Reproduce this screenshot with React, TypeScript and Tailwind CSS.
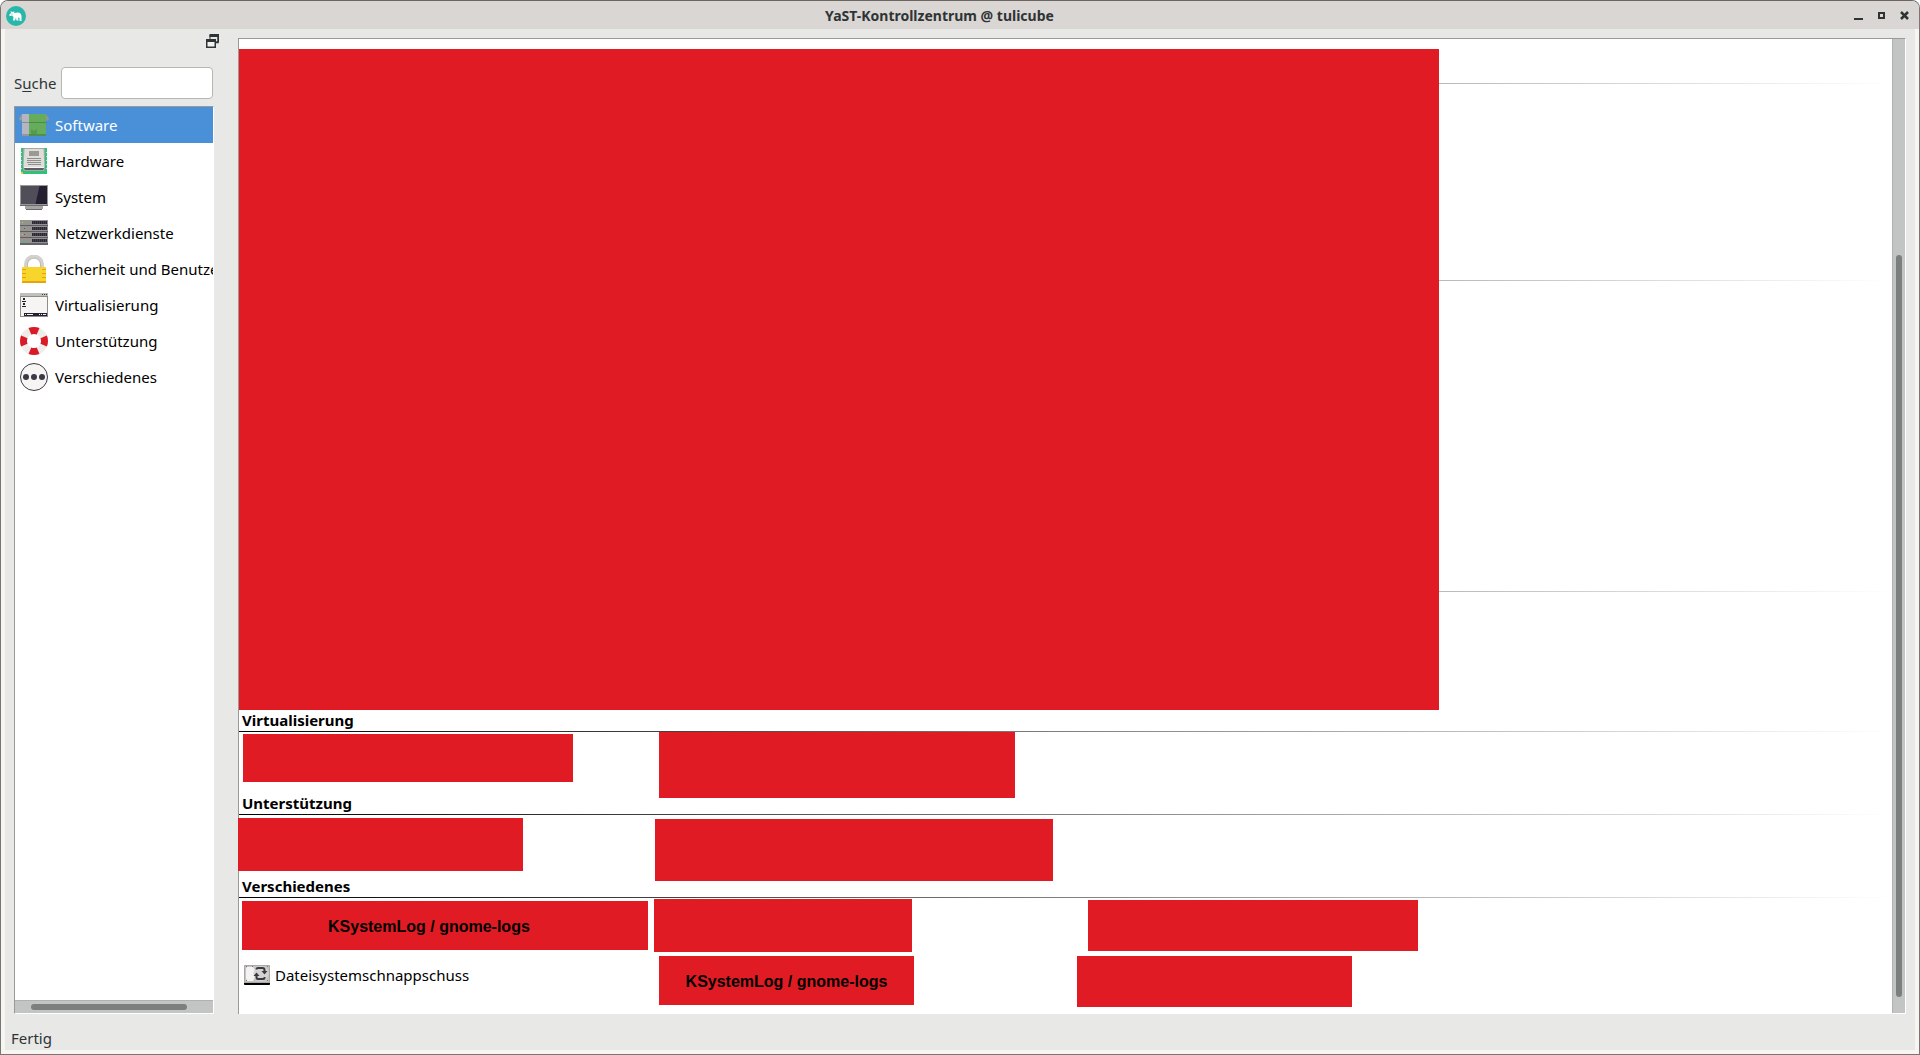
import { useState } from "react"

interface Block {
    className: string
    label?: string
    labelClassName?: string
}

const rule = "h-px shrink-0 bg-linear-to-r from-black to-transparent"

function SoftwareIcon() {
    return (
        <svg viewBox="0 0 28 28" className="size-7 shrink-0 overflow-visible" aria-hidden="true">
            <path d="M2 3L-1 7.500L0 10L2 9Z" fill="#9a9a9e" />
            <path d="M26 3L29 7.500L28 10L26 9Z" fill="#8b9a8b" />
            <path d="M2 3H9V25H2Z" fill="#b3b6c0" />
            <path d="M9 3H26V25H9Z" fill="#65ad5c" />
            <path d="M11 25V18L14 20L17 18V25Z" fill="#579a4f" />
            <path d="M1.500 11H9V12H1.500Z" fill="#898c95" />
            <path d="M9 11H26.500V12H9Z" fill="#4c8a45" />
            <path d="M2 23H9V25H2Z" fill="#9597a0" />
            <path d="M9 23H26V25H9Z" fill="#4f9147" />
        </svg>
    )
}

function HardwareIcon() {
    return (
        <svg viewBox="0 0 28 28" className="size-7 shrink-0" aria-hidden="true">
            <path d="M1 1H27V27H1Z" fill="#2fc27d" />
            <path d="M1.500 5V24M26.500 5V24" stroke="#a8ecca" strokeDasharray="1 3" />
            <path d="M1 25H3V27H1Z" fill="#e8d23a" />
            <rect x="3" y="1" width="22" height="23" rx="2" fill="#a9a7a2" />
            <path d="M4.500 2H23.500L24.500 20H3.500Z" fill="#deddda" />
            <path d="M4 21H24L23 23H5Z" fill="#5e5c64" />
            <path d="M4 20H24V21H4Z" fill="#f6f5f4" />
            <path d="M9 4H19V9H9Z" fill="#9a9996" />
            <path d="M7 11.500H21M7 13.500H21M7 15.500H21M8 17.500H21" stroke="#8f8e8b" />
        </svg>
    )
}

function SystemIcon() {
    return (
        <svg viewBox="0 0 28 28" className="size-7 shrink-0" aria-hidden="true">
            <path d="M0 2H28V23H0Z" fill="#9a9996" />
            <path d="M1 3H27V21H1Z" fill="#504e58" />
            <path d="M19.500 3H27V21H15.500Z" fill="#241f31" />
            <path d="M0 22H28V23H0Z" fill="#6a6970" />
            <path d="M5 23H23V26H5Z" fill="#a5a4a1" />
            <path d="M6 26H22V27H6Z" fill="#6a6970" />
        </svg>
    )
}

function NetworkIcon() {
    const units = [1, 7, 13, 19]
    return (
        <svg viewBox="0 0 28 28" className="size-7 shrink-0" aria-hidden="true">
            <path d="M0 1H28V26H0Z" fill="#5e5c64" />
            {units.map((y, i) => (
                <g key={y}>
                    <path d={`M0 ${y}H28V${y + 5}H0Z`} fill="#949390" />
                    <path d={`M12 ${y + 2.5}H27`} stroke="#2c2838" strokeWidth="3" />
                    <path d={`M13.5 ${y + 2.5}H27`} stroke="#6c6a72" strokeWidth="3" strokeDasharray="0.4 1.600" />
                    <path d={`M2 ${y + 2}H3V${y + 3}H2Z`} fill={i % 2 ? "#33d17a" : "#f5c211"} />
                    <path d={`M4 ${y + 2}H5V${y + 3}H4Z`} fill={i === 1 || i === 2 ? "#e01b24" : "#33d17a"} />
                </g>
            ))}
            <path d="M0 24H28V26H0Z" fill="#64626a" />
        </svg>
    )
}

function LockIcon() {
    return (
        <svg viewBox="0 0 28 28" className="size-7 shrink-0" aria-hidden="true">
            <path d="M6 13V9A8 7.500 0 0 1 22 9V13" fill="none" stroke="#d3d2ce" strokeWidth="4" />
            <path d="M7.500 12V9A6.500 6 0 0 1 20.500 9V12" fill="none" stroke="#bdbbb6" />
            <rect x="2" y="12" width="24" height="16" rx="0.5" fill="#f8d52d" />
            <path d="M2 14.500H6M2 18.500H6M2 22.500H6M22 14.500H26M22 18.500H26M22 22.500H26" stroke="#e5a50a" />
            <path d="M2 26H26V28H2Z" fill="#e5a50a" />
        </svg>
    )
}

function VirtualIcon() {
    return (
        <svg viewBox="0 0 28 28" className="size-7 shrink-0" aria-hidden="true">
            <path d="M0 2H28V26H0Z" fill="#8e8d8a" />
            <path d="M1 6H27V25H1Z" fill="#f6f5f4" />
            <path d="M0 2H28V5H0Z" fill="#c0bfbc" />
            <path d="M22 3H23V4H22ZM24 3H25V4H24ZM26 3H27V4H26Z" fill="#3d3846" />
            <path d="M3 7H5V9H3ZM2 10H6V11H2ZM3 12H5V14H3ZM2 15H6V16H2Z" fill="#241f31" />
            <path d="M4 22H27V25H4Z" fill="#241f31" />
            <path d="M5 23H6V24H5ZM7 23H13V24H7ZM19 23H20V24H19ZM21 23H22V24H21ZM23 23H26V24H23Z" fill="#f6f5f4" />
        </svg>
    )
}

function SupportIcon() {
    return (
        <svg viewBox="0 0 28 28" className="size-7 shrink-0" aria-hidden="true">
            <circle cx="14" cy="14" r="10.500" fill="none" stroke="#eeedeb" strokeWidth="7" />
            <circle
                cx="14"
                cy="14"
                r="10.500"
                fill="none"
                stroke="#d81b26"
                strokeWidth="7"
                pathLength="360"
                strokeDasharray="46 44"
                strokeDashoffset="23"
            />
        </svg>
    )
}

function MiscIcon() {
    return (
        <svg viewBox="0 0 28 28" className="size-7 shrink-0" aria-hidden="true">
            <circle cx="14" cy="14" r="13.500" fill="#f6f5f4" stroke="#3d3846" />
            <circle cx="6" cy="14" r="3" fill="#3d3846" />
            <circle cx="14" cy="14" r="3" fill="#3d3846" />
            <circle cx="22" cy="14" r="3" fill="#3d3846" />
        </svg>
    )
}

function SnapshotIcon() {
    return (
        <svg viewBox="0 0 26 20" className="h-5 w-[26px] shrink-0" aria-hidden="true">
            <rect width="26" height="20" rx="1" fill="#a9a8a4" />
            <rect x="1" y="1" width="24" height="16" rx="1" fill="#c6c5c1" />
            <path d="M3 2H9L11 5V12L9 16H3L2 13V4Z" fill="#f4f3f1" />
            <circle cx="17" cy="8.500" r="7.500" fill="#d5d4d0" />
            <path d="M2 1.500H3M8 1.500H9M23 1.500H24M2 15.500H3M23 15.500H24" stroke="#77767b" />
            <path d="M0 18H26V19Q26 20 25 20H1Q0 20 0 19Z" fill="#000" />
            <path d="M12.500 4.500Q12.500 3 14 3H18.500Q20.500 3 20.500 5V7M20.500 12V12.500Q20.500 14 19 14H14Q12.500 14 12.500 12V9" fill="none" stroke="#3d3846" strokeWidth="2" />
            <path d="M17.500 6H23.500L20.500 9.500ZM9.500 11H15.500L12.500 7.500Z" fill="#3d3846" />
        </svg>
    )
}

function YastLogo() {
    return (
        <svg viewBox="0 0 20 20" className="size-5" aria-hidden="true">
            <circle cx="10" cy="10" r="10" fill="#27b8aa" />
            <path
                d="M3 9L5 7L4.500 5L6 6L8.500 5.500L8 7L12 6.500Q15 6.500 15.500 10V15H13.500V12L12 11.500L12.500 14.500H10.500L10 11.500L9 14.500H7L7.500 11L6 9.500L4 10Z"
                fill="#fff"
            />
            <path d="M5.500 7.500H6.500V8.500H5.500Z" fill="#27b8aa" />
        </svg>
    )
}

const groups = [
    { name: "Software", icon: <SoftwareIcon /> },
    { name: "Hardware", icon: <HardwareIcon /> },
    { name: "System", icon: <SystemIcon /> },
    { name: "Netzwerkdienste", icon: <NetworkIcon /> },
    { name: "Sicherheit und Benutze", icon: <LockIcon /> },
    { name: "Virtualisierung", icon: <VirtualIcon /> },
    { name: "Unterstützung", icon: <SupportIcon /> },
    { name: "Verschiedenes", icon: <MiscIcon /> },
]

const virtualBlocks: Block[] = [
    { className: "ml-1 mt-0.5 h-12 w-[330px]" },
    { className: "ml-[5px] h-[66px] w-[356px]" },
]

const supportBlocks: Block[] = [
    { className: "-ml-px mt-[3px] h-[53px] w-[285px]" },
    { className: "ml-px mt-1 h-[62px] w-[398px]" },
]

const miscBlocks: Block[] = [
    { className: "ml-[3px] mt-[3px] h-[49px] w-[406px]", label: "KSystemLog / gnome-logs", labelClassName: "pl-[86px]" },
    { className: "mt-px h-[53px] w-[258px]" },
    { className: "ml-[11px] mt-0.5 h-[51px] w-[330px]" },
]

const lastBlocks: Block[] = [
    { className: "ml-[5px] h-[49px] w-[255px]", label: "KSystemLog / gnome-logs", labelClassName: "justify-center" },
    { className: "h-[51px] w-[275px]" },
]

function RedBlock({ block }: { block: Block }) {
    return (
        <div className={block.className}>
            <div className={`flex size-full items-center bg-[#e01b24] pt-0.5 ${block.labelClassName ?? ""}`}>
                {block.label && (
                    <span className="font-['Liberation_Sans',sans-serif] text-base font-bold whitespace-nowrap">
                        {block.label}
                    </span>
                )}
            </div>
        </div>
    )
}

function SectionHeading({ title }: { title: string }) {
    return (
        <>
            <h2 className="h-[21px] pl-[3px] text-[15px] leading-[21px] font-bold">{title}</h2>
            <div className={rule} />
        </>
    )
}

const columns = "grid grid-cols-[415px_423px_1fr] items-start"

export default function App() {
    const [selected, setSelected] = useState("Software")
    const [query, setQuery] = useState("")

    return (
        <div className="flex min-h-screen flex-col overflow-hidden rounded-t-lg border border-[#7a7673] border-t-[#6d6562] bg-[#f6f5f2] font-['Noto_Sans',sans-serif] text-[15px] text-black">
            <header className="flex h-7 shrink-0 items-center justify-between bg-[#dad6d3] pt-px pr-[9px] pl-[5px] text-[#2e3436]">
                <YastLogo />
                <h1 className="text-sm font-bold">YaST-Kontrollzentrum @ tulicube</h1>
                <div className="flex gap-3">
                    <button type="button" aria-label="Minimieren">
                        <svg viewBox="0 0 11 11" className="size-[11px]"><path d="M1 8H10V10H1Z" fill="#2e3436" /></svg>
                    </button>
                    <button type="button" aria-label="Maximieren">
                        <svg viewBox="0 0 11 11" className="size-[11px]"><path d="M3 3H8V8H3Z" fill="none" stroke="#2e3436" strokeWidth="2" /></svg>
                    </button>
                    <button type="button" aria-label="Schließen">
                        <svg viewBox="0 0 11 11" className="size-[11px]"><path d="M2 2L9 9M9 2L2 9" stroke="#2e3436" strokeWidth="2.500" /></svg>
                    </button>
                </div>
            </header>

            <div className="mx-1 mb-1 flex grow flex-col bg-[#e8e8e6]">
                <div className="flex grow pr-[9px] pl-[9px]">
                    <aside className="flex w-[200px] shrink-0 flex-col">
                        <button type="button" aria-label="Andocken" className="mt-[5px] mr-[-6px] self-end">
                            <svg viewBox="0 0 14 14" className="size-3.5">
                                <path d="M4 6V1H12.500V8H10" fill="none" stroke="#2e3436" strokeWidth="1" />
                                <path d="M3.500 0H13V3H3.500Z" fill="#2e3436" />
                                <path d="M12 2V8.500H10" fill="none" stroke="#2e3436" strokeWidth="1.500" />
                                <path d="M0 5H10V14H0Z" fill="#2e3436" />
                                <path d="M1.500 8H8.500V12.500H1.500Z" fill="#f2f2f0" />
                            </svg>
                        </button>
                        <div className="mt-[19px] flex items-center justify-between pr-px">
                            <label htmlFor="search" className="text-[#2e3436]">
                                S<span className="underline underline-offset-2">u</span>che
                            </label>
                            <input
                                id="search"
                                type="text"
                                value={query}
                                onChange={(e) => setQuery(e.target.value)}
                                className="h-8 w-[152px] rounded border border-[#b6b6b3] bg-white px-2 outline-none"
                            />
                        </div>
                        <nav className="mt-[7px] flex grow flex-col border-t border-r border-b border-l border-[#9a9a96] border-r-white border-b-white bg-white">
                            {groups.map((group) => (
                                <button
                                    key={group.name}
                                    type="button"
                                    onClick={() => setSelected(group.name)}
                                    className={`flex h-9 shrink-0 items-center gap-[7px] overflow-hidden pl-[5px] text-left whitespace-nowrap ${selected === group.name ? "bg-[#4a90d9] text-white" : ""}`}
                                >
                                    {group.icon}
                                    {group.name}
                                </button>
                            ))}
                            <div className="mt-auto h-[13px] border-t border-[#b0b1b0] bg-[#c3c5c4] pt-[3px] pl-4">
                                <div className="h-1.5 w-[156px] rounded-full bg-[#7b7f7e]" />
                            </div>
                        </nav>
                    </aside>

                    <main className="mt-[9px] ml-6 flex grow border-t border-r border-l border-[#9a9a96] border-r-white bg-white">
                        <div className="grow">
                            {/* first groups, covered by the large block */}
                            <div className="relative flex h-[671px] flex-col">
                                <div className="h-11 shrink-0" />
                                <div className={rule} />
                                <div className="h-[196px] shrink-0" />
                                <div className={rule} />
                                <div className="h-[310px] shrink-0" />
                                <div className={rule} />
                                <div className="absolute top-2.5 bottom-0 left-0 w-[1200px] bg-[#e01b24]" />
                            </div>

                            <section>
                                <SectionHeading title="Virtualisierung" />
                                <div className={`h-[61px] ${columns}`}>
                                    {virtualBlocks.map((block) => <RedBlock key={block.className} block={block} />)}
                                </div>
                            </section>

                            <section>
                                <SectionHeading title="Unterstützung" />
                                <div className={`h-[61px] ${columns}`}>
                                    {supportBlocks.map((block) => <RedBlock key={block.className} block={block} />)}
                                </div>
                            </section>

                            <section>
                                <SectionHeading title="Verschiedenes" />
                                <div className={`h-[58px] ${columns}`}>
                                    {miscBlocks.map((block) => <RedBlock key={block.className} block={block} />)}
                                </div>
                                <div className={columns}>
                                    <button type="button" className="flex h-[38px] items-center gap-[5px] pl-[5px]">
                                        <SnapshotIcon />
                                        Dateisystemschnappschuss
                                    </button>
                                    {lastBlocks.map((block) => <RedBlock key={block.className} block={block} />)}
                                </div>
                            </section>
                        </div>
                        <div className="mb-px flex w-[13px] shrink-0 flex-col border-l border-[#b0b1b0] bg-[#c3c5c4] pt-[216px] pr-[3px] pb-4 pl-[3px]">
                            <div className="grow rounded-full bg-[#7b7f7e]" />
                        </div>
                    </main>
                </div>
                <footer className="h-9 shrink-0 pt-3.5 pl-1.5 leading-5 text-[#2e3436]">Fertig</footer>
            </div>
        </div>
    )
}
